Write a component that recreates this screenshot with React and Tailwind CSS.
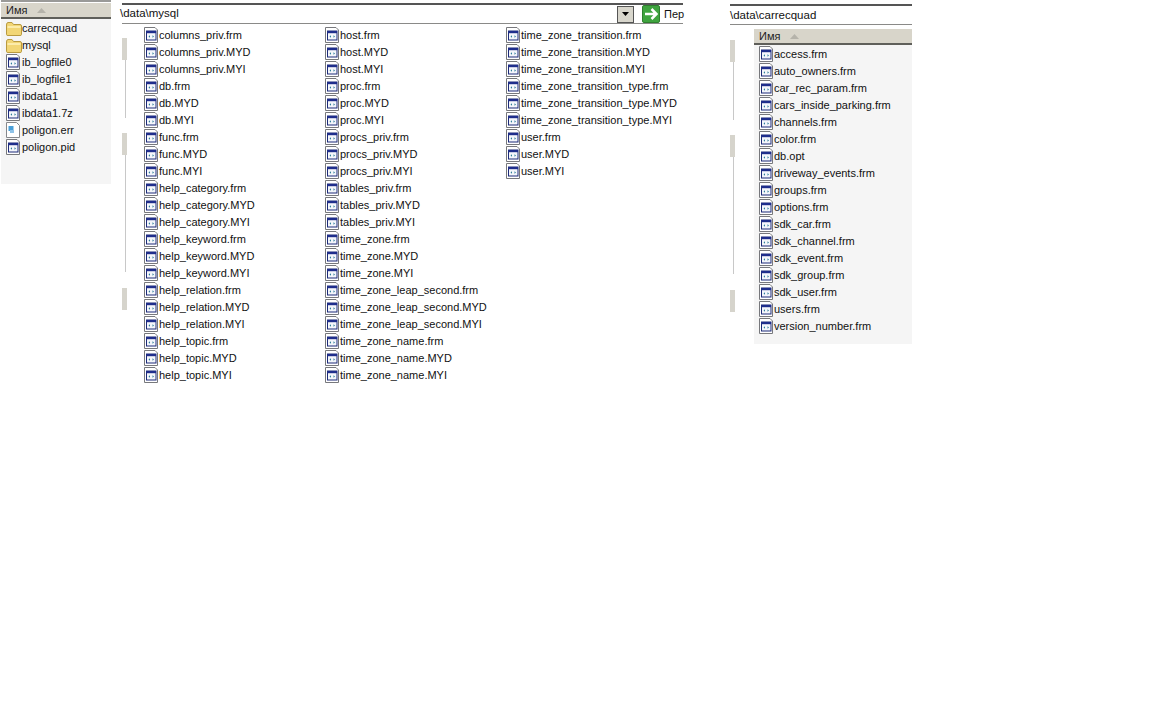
const col1 = ["columns_priv.frm","columns_priv.MYD","columns_priv.MYI","db.frm","db.MYD","db.MYI","func.frm","func.MYD","func.MYI","help_category.frm","help_category.MYD","help_category.MYI","help_keyword.frm","help_keyword.MYD","help_keyword.MYI","help_relation.frm","help_relation.MYD","help_relation.MYI","help_topic.frm","help_topic.MYD","help_topic.MYI"];
const col2 = ["host.frm","host.MYD","host.MYI","proc.frm","proc.MYD","proc.MYI","procs_priv.frm","procs_priv.MYD","procs_priv.MYI","tables_priv.frm","tables_priv.MYD","tables_priv.MYI","time_zone.frm","time_zone.MYD","time_zone.MYI","time_zone_leap_second.frm","time_zone_leap_second.MYD","time_zone_leap_second.MYI","time_zone_name.frm","time_zone_name.MYD","time_zone_name.MYI"];
const col3 = ["time_zone_transition.frm","time_zone_transition.MYD","time_zone_transition.MYI","time_zone_transition_type.frm","time_zone_transition_type.MYD","time_zone_transition_type.MYI","user.frm","user.MYD","user.MYI"];
const right = ["access.frm","auto_owners.frm","car_rec_param.frm","cars_inside_parking.frm","channels.frm","color.frm","db.opt","driveway_events.frm","groups.frm","options.frm","sdk_car.frm","sdk_channel.frm","sdk_event.frm","sdk_group.frm","sdk_user.frm","users.frm","version_number.frm"];
const left = [["carrecquad","folder"],["mysql","folder"],["ib_logfile0","app"],["ib_logfile1","app"],["ibdata1","app"],["ibdata1.7z","app"],["poligon.err","err"],["poligon.pid","app"]];

function AppIcon() {
  return (
    <svg width="15" height="16" viewBox="0 0 15 16" className="shrink-0 -translate-y-[1px]">
      <path d="M.5 .5H11L13.5 3V15.5H.5Z" fill="#fff" stroke="#77787c" />
      <rect x="2.5" y="4" width="9.5" height="9" fill="#f4f6fb" stroke="#1c2a78" />
      <rect x="2.5" y="4" width="9.5" height="2.2" fill="#1f2e8c" />
      <path d="M4.5 9.5l1.5-1.2v2.4zM10 9.5L8.5 8.3v2.4z" fill="#2f7f9a" />
    </svg>
  );
}
function FolderIcon() {
  return (
    <svg width="16" height="14" viewBox="0 0 16 14" className="shrink-0">
      <path d="M.5 3V12.5Q.5 13.5 2 13.5H14Q15.5 13.5 15.5 12.5V4Q15.5 2.5 14 2.5H7.5L6 .5H2Q.5.5.5 3Z" fill="#f2d675" stroke="#b99a3f" />
      <path d="M1.5 5H14.5" stroke="#fff3bd" strokeWidth="1.5" />
    </svg>
  );
}
function ErrIcon() {
  return (
    <svg width="15" height="16" viewBox="0 0 15 16" className="shrink-0 -translate-y-[1px]">
      <path d="M.5 .5H10.5L13.5 3.5V15.5H.5Z" fill="#fff" stroke="#86888c" />
      <rect x="2.5" y="4" width="5" height="5" fill="#4a9fd8" />
      <rect x="4" y="8" width="4" height="3" fill="#8fc3e8" />
    </svg>
  );
}
function Row({ name, type = "app", wide = false }) {
  return (
    <div className="flex h-[17px] items-center whitespace-nowrap">
      <div className={wide ? "flex w-[16px] justify-start" : "flex w-[15px] justify-start"}>
        {type === "folder" ? <FolderIcon /> : type === "err" ? <ErrIcon /> : <AppIcon />}
      </div>
      <span className="text-[11px] leading-[17px] text-[#111]">{name}</span>
    </div>
  );
}
function Header() {
  return (
    <div className="flex h-[16px] items-center border-b-2 border-[#5f5f5a] bg-[#d8d5ca] pl-[5px] text-[11px] text-[#222]">
      Имя
      <svg width="9" height="5" viewBox="0 0 9 5" className="ml-[10px]"><path d="M0 5L4.5 0L9 5Z" fill="#b5b3aa" /></svg>
    </div>
  );
}
function Strip() {
  return (
    <div className="flex w-[5px] flex-col items-start">
      <div className="h-[22px] w-[5px] bg-[#d6d4cc]" />
      <div className="ml-[3px] h-[58px] w-[1px] bg-[#c8c8c8]" />
      <div className="h-[15px]" />
      <div className="h-[22px] w-[5px] bg-[#d6d4cc]" />
      <div className="ml-[3px] h-[117px] w-[1px] bg-[#c8c8c8]" />
      <div className="h-[16px]" />
      <div className="h-[22px] w-[5px] bg-[#d6d4cc]" />
    </div>
  );
}
function Col({ items }) {
  return (
    <div className="w-[181px]">
      {items.map((n) => <Row key={n} name={n} />)}
    </div>
  );
}
export default function App() {
  return (
    <div className="flex h-[720px] w-[1152px] overflow-hidden bg-white font-['Liberation_Sans',Arial,sans-serif]">
      <div className="ml-[1px] h-[184px] w-[110px] bg-[#f5f5f5]">
        <div className="border-t-2 border-[#9a9a98] bg-white pt-[1px]">
          <Header />
        </div>
        <div className="pl-[5px] pt-[1px]">
          {left.map(([n, t]) => <Row key={n} name={n} type={t} wide />)}
        </div>
      </div>
      <div className="ml-[11px] w-[561px]">
        <div className="mt-[3px] flex h-[21px] items-center border-t-2 border-b border-t-[#555] border-b-[#8a8a88]">
          <span className="ml-[-2px] flex-1 pb-[1px] text-[11.5px] text-[#111]">\data\mysql</span>
          <div className="flex h-[17px] w-[17px] items-center justify-center border border-[#555] bg-[#d8d6cc]">
            <svg width="7" height="4" viewBox="0 0 7 4"><path d="M0 0H7L3.5 4Z" fill="#000" /></svg>
          </div>
          <div className="ml-[8px] flex h-[18px] w-[18px] items-center justify-center rounded-[2px] border border-[#2f7f2f] bg-[#3fa43f]">
            <svg width="14" height="12" viewBox="0 0 14 12"><path d="M1 6H12M7.5 1L12.5 6L7.5 11" stroke="#fff" strokeWidth="2.5" fill="none" /></svg>
          </div>
          <span className="ml-[4px] w-[19px] text-[11px] text-[#111]">Пер</span>
        </div>
        <div className="flex">
          <div className="pt-[14px]"><Strip /></div>
          <div className="ml-[17px] flex pt-[3px]">
            <Col items={col1} />
            <Col items={col2} />
            <Col items={col3} />
          </div>
        </div>
      </div>
      <div className="ml-[47px] w-[182px]">
        <div className="mt-[4px] flex h-[21px] items-center border-t-2 border-b border-t-[#555] border-b-[#8a8a88] pt-[1px] text-[11.5px] text-[#111]">
          \data\carrecquad
        </div>
        <div className="flex">
          <div className="pt-[15px]"><Strip /></div>
          <div className="ml-[19px] mt-[4px] flex-1">
            <Header />
            <div className="h-[299px] bg-[#f5f5f5] pl-[5px] pt-[1px]">
              {right.map((n) => <Row key={n} name={n} />)}
            </div>
          </div>
        </div>
      </div>
    </div>
  );
}
